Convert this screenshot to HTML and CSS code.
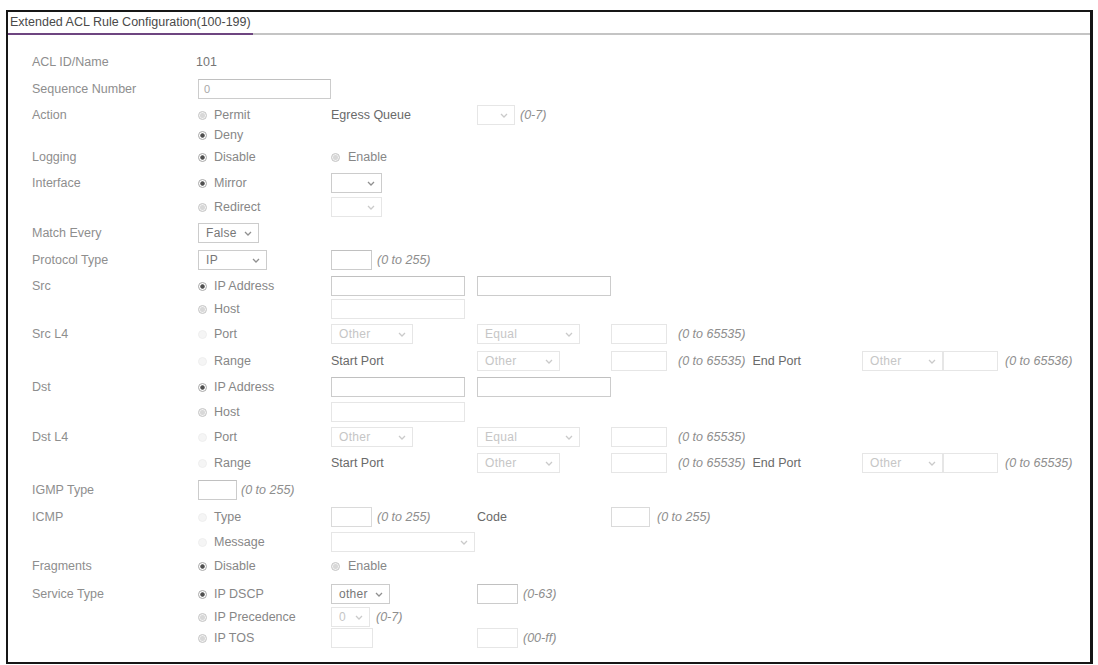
FILE: index.html
```html
<!DOCTYPE html>
<html>
<head>
<meta charset="utf-8">
<title>Extended ACL Rule Configuration</title>
<link rel="stylesheet" href="styles.css">
</head>
<body>
<div class="frame">
  <div class="head"><span class="title">Extended ACL Rule Configuration(100-199)</span></div>
  <div class="form">
    <div class="row h27"><div class="c lbl">ACL ID/Name</div><div class="c val">101</div></div>
    <div class="row h26"><div class="c lbl">Sequence Number</div><div class="c"><span class="inp w133"><span class="ph">0</span></span></div></div>
    <div class="row h20"><div class="c lbl">Action</div><div class="c"><span class="rd"><i class="dot"></i>Permit</span></div><div class="c dark">Egress Queue</div><div class="c"><span class="sel w38 dis"><span></span><svg class="chev" viewBox="0 0 8 5"><path d="M1 1l3 3 3-3"/></svg></span><span class="hint h5">(0-7)</span></div></div>
    <div class="row h22"><div class="c lbl"></div><div class="c"><span class="rd"><i class="dot on"></i>Deny</span></div></div>
    <div class="row h26"><div class="c lbl">Logging</div><div class="c"><span class="rd"><i class="dot on"></i>Disable</span></div><div class="c"><span class="rd r0"><i class="dot"></i>Enable</span></div></div>
    <div class="row h24"><div class="c lbl">Interface</div><div class="c"><span class="rd"><i class="dot on"></i>Mirror</span></div><div class="c"><span class="sel w51"><span></span><svg class="chev" viewBox="0 0 8 5"><path d="M1 1l3 3 3-3"/></svg></span></div></div>
    <div class="row h26"><div class="c lbl"></div><div class="c"><span class="rd"><i class="dot"></i>Redirect</span></div><div class="c"><span class="sel w51 dis"><span></span><svg class="chev" viewBox="0 0 8 5"><path d="M1 1l3 3 3-3"/></svg></span></div></div>
    <div class="row h27"><div class="c lbl">Match Every</div><div class="c"><span class="sel w61"><span>False</span><svg class="chev" viewBox="0 0 8 5"><path d="M1 1l3 3 3-3"/></svg></span></div></div>
    <div class="row h26"><div class="c lbl">Protocol Type</div><div class="c"><span class="sel w69"><span>IP</span><svg class="chev" viewBox="0 0 8 5"><path d="M1 1l3 3 3-3"/></svg></span></div><div class="c"><span class="inp w41"></span><span class="hint h5">(0 to 255)</span></div></div>
    <div class="row h23"><div class="c lbl">Src</div><div class="c"><span class="rd"><i class="dot on"></i>IP Address</span></div><div class="c"><span class="inp w134"></span></div><div class="c"><span class="inp w134"></span></div></div>
    <div class="row h25"><div class="c lbl"></div><div class="c"><span class="rd"><i class="dot"></i>Host</span></div><div class="c"><span class="inp w134 dis"></span></div></div>
    <div class="row h27"><div class="c lbl">Src L4</div><div class="c"><span class="rd off"><i class="dot"></i>Port</span></div><div class="c"><span class="sel w82 dis"><span>Other</span><svg class="chev" viewBox="0 0 8 5"><path d="M1 1l3 3 3-3"/></svg></span></div><div class="c"><span class="sel w103 dis"><span>Equal</span><svg class="chev" viewBox="0 0 8 5"><path d="M1 1l3 3 3-3"/></svg></span></div><div class="c"><span class="inp w56 dis"></span><span class="hint h11">(0 to 65535)</span></div></div>
    <div class="row h26"><div class="c lbl"></div><div class="c"><span class="rd off"><i class="dot"></i>Range</span></div><div class="c dark">Start Port</div><div class="c"><span class="sel w83 dis"><span>Other</span><svg class="chev" viewBox="0 0 8 5"><path d="M1 1l3 3 3-3"/></svg></span></div><div class="c"><span class="endgrp"><span class="inp w56 dis"></span><span class="hint h11">(0 to 65535)</span><span class="dark ep">End Port</span></span><span class="sel w81 dis"><span>Other</span><svg class="chev" viewBox="0 0 8 5"><path d="M1 1l3 3 3-3"/></svg></span><span class="inp w55 dis"></span><span class="hint h7">(0 to 65536)</span></div></div>
    <div class="row h25"><div class="c lbl">Dst</div><div class="c"><span class="rd"><i class="dot on"></i>IP Address</span></div><div class="c"><span class="inp w134"></span></div><div class="c"><span class="inp w134"></span></div></div>
    <div class="row h25"><div class="c lbl"></div><div class="c"><span class="rd"><i class="dot"></i>Host</span></div><div class="c"><span class="inp w134 dis"></span></div></div>
    <div class="row h26"><div class="c lbl">Dst L4</div><div class="c"><span class="rd off"><i class="dot"></i>Port</span></div><div class="c"><span class="sel w82 dis"><span>Other</span><svg class="chev" viewBox="0 0 8 5"><path d="M1 1l3 3 3-3"/></svg></span></div><div class="c"><span class="sel w103 dis"><span>Equal</span><svg class="chev" viewBox="0 0 8 5"><path d="M1 1l3 3 3-3"/></svg></span></div><div class="c"><span class="inp w56 dis"></span><span class="hint h11">(0 to 65535)</span></div></div>
    <div class="row h27"><div class="c lbl"></div><div class="c"><span class="rd off"><i class="dot"></i>Range</span></div><div class="c dark">Start Port</div><div class="c"><span class="sel w83 dis"><span>Other</span><svg class="chev" viewBox="0 0 8 5"><path d="M1 1l3 3 3-3"/></svg></span></div><div class="c"><span class="endgrp"><span class="inp w56 dis"></span><span class="hint h11">(0 to 65535)</span><span class="dark ep">End Port</span></span><span class="sel w81 dis"><span>Other</span><svg class="chev" viewBox="0 0 8 5"><path d="M1 1l3 3 3-3"/></svg></span><span class="inp w55 dis"></span><span class="hint h7">(0 to 65535)</span></div></div>
    <div class="row h27"><div class="c lbl">IGMP Type</div><div class="c"><span class="inp w39"></span><span class="hint h4">(0 to 255)</span></div></div>
    <div class="row h25"><div class="c lbl">ICMP</div><div class="c"><span class="rd off"><i class="dot"></i>Type</span></div><div class="c"><span class="inp w41 lite"></span><span class="hint h5">(0 to 255)</span></div><div class="c dark">Code</div><div class="c"><span class="inp w39 lite"></span><span class="hint h7">(0 to 255)</span></div></div>
    <div class="row h24"><div class="c lbl"></div><div class="c"><span class="rd off"><i class="dot"></i>Message</span></div><div class="c"><span class="sel w144 dis"><span></span><svg class="chev" viewBox="0 0 8 5"><path d="M1 1l3 3 3-3"/></svg></span></div></div>
    <div class="row h28"><div class="c lbl">Fragments</div><div class="c"><span class="rd"><i class="dot on"></i>Disable</span></div><div class="c"><span class="rd r0"><i class="dot"></i>Enable</span></div></div>
    <div class="row h23"><div class="c lbl">Service Type</div><div class="c"><span class="rd"><i class="dot on"></i>IP DSCP</span></div><div class="c"><span class="sel w59"><span>other</span><svg class="chev" viewBox="0 0 8 5"><path d="M1 1l3 3 3-3"/></svg></span></div><div class="c"><span class="inp w41"></span><span class="hint h5">(0-63)</span></div></div>
    <div class="row h21"><div class="c lbl"></div><div class="c"><span class="rd"><i class="dot"></i>IP Precedence</span></div><div class="c"><span class="sel w39 dis"><span>0</span><svg class="chev" viewBox="0 0 8 5"><path d="M1 1l3 3 3-3"/></svg></span><span class="hint h6">(0-7)</span></div></div>
    <div class="row h20"><div class="c lbl"></div><div class="c"><span class="rd"><i class="dot"></i>IP TOS</span></div><div class="c"><span class="inp w42 dis"></span></div><div class="c"><span class="inp w41 dis"></span><span class="hint h5">(00-ff)</span></div></div>
  </div>
</div>
</body>
</html>
```
FILE: styles.css
```css
* { box-sizing: border-box; }
html, body { margin: 0; padding: 0; background: #ffffff; }
body {
  font-family: "Liberation Sans", Arial, sans-serif;
  font-size: 12.5px;
  color: #888888;
}
.frame {
  margin: 10px 0 0 6px;
  width: 1087px;
  height: 654px;
  border: 2px solid #161616;
  border-right-width: 3px;
  background: #ffffff;
}
.head {
  display: flex;
  height: 23px;
  border-bottom: 2px solid #c4c4c4;
}
.title {
  padding: 0 2px;
  line-height: 21px;
  color: #4a4a4a;
  border-bottom: 2px solid #6e4580;
  margin-bottom: -2px;
  height: 23px;
}
.form {
  padding: 17px 0 0 24px;
}
.row {
  display: grid;
  grid-template-columns: 166px 133px 146px 134px 1fr;
  align-items: start;
}
.h20 { height: 20px; }
.h21 { height: 21px; }
.h22 { height: 22px; }
.h23 { height: 23px; }
.h24 { height: 24px; }
.h25 { height: 25px; }
.h26 { height: 26px; }
.h27 { height: 27px; }
.h28 { height: 28px; }
.c {
  display: flex;
  align-items: center;
  height: 20px;
  white-space: nowrap;
}
.lbl { color: #8e8e8e; }
.val { color: #767676; margin-left: -2px; }
.dark { color: #6a6a6a; }

/* radios */
.rd {
  display: flex;
  align-items: center;
  gap: 7px;
  margin-left: 0;
  color: #878787;
}
.rd.r0 { margin-left: 0; gap: 8px; }
.dot {
  width: 9px;
  height: 9px;
  border-radius: 50%;
  border: 1px solid #c4c4c4;
  background: radial-gradient(circle, #d8d8d8 0 2px, #f2f2f2 3px);
  display: inline-block;
  flex: none;
}
.dot.on {
  border-color: #a8a8a8;
  background: radial-gradient(circle, #4f4f4f 0 1.8px, #ffffff 2.6px);
}
.rd.off .dot { border-color: #efefef; background: #f5f5f5; }

/* inputs */
.inp {
  display: flex;
  align-items: center;
  height: 20px;
  border: 1px solid #cccccc;
  border-top-color: #c0c0c0;
  background: #ffffff;
  padding-left: 5px;
  flex: none;
}
.inp.lite { border-color: #dadada; }
.inp.dis { border-color: #e6e6e6; }
.ph { color: #a8a8a8; font-size: 11px; }

/* selects */
.sel {
  display: flex;
  align-items: center;
  justify-content: space-between;
  height: 20px;
  border: 1px solid #cccccc;
  background: #ffffff;
  padding: 0 6px 0 7px;
  font-size: 12px;
  color: #777777;
  flex: none;
  letter-spacing: 0.3px;
}
.sel.dis { border-color: #e6e6e6; color: #c6c6c6; }
.chev {
  width: 8px;
  height: 5px;
  fill: none;
  stroke: #909090;
  stroke-width: 1.3;
}
.sel.dis .chev { stroke: #cacaca; }

.w38 { width: 38px; }
.w39 { width: 39px; }
.w41 { width: 41px; }
.w42 { width: 42px; }
.w51 { width: 51px; }
.w55 { width: 55px; }
.w56 { width: 56px; }
.w59 { width: 59px; }
.w61 { width: 61px; }
.w69 { width: 69px; }
.w81 { width: 81px; }
.w82 { width: 82px; }
.w83 { width: 83px; }
.w103 { width: 103px; }
.w133 { width: 133px; }
.w134 { width: 134px; }
.w144 { width: 144px; }

.hint {
  font-style: italic;
  color: #8e8e8e;
}
.h4 { margin-left: 4px; }
.h5 { margin-left: 5px; }
.h6 { margin-left: 6px; }
.h7 { margin-left: 7px; }
.h11 { margin-left: 11px; }
.endgrp {
  display: flex;
  align-items: center;
  width: 251px;
  flex: none;
}
.ep { margin-left: 7px; }
```
